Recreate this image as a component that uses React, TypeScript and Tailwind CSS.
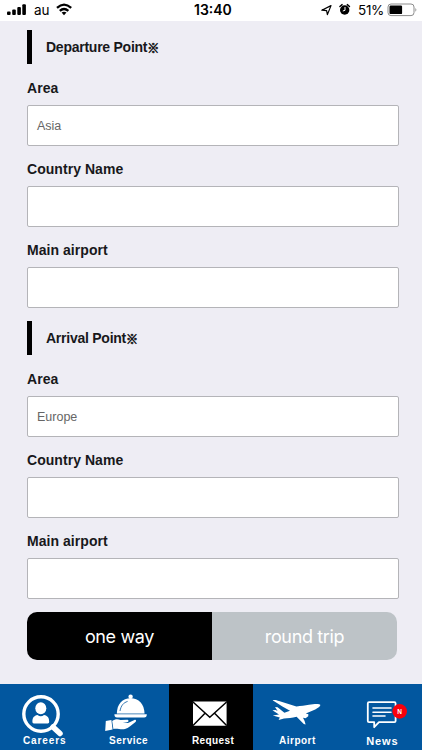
import type { ReactNode } from "react";
import clsx from "clsx";

function StatusBar() {
  return (
    <header className="relative h-[21px] bg-white text-black">
      <svg className="block h-[21px] w-full" viewBox="0 0 422 21">
        <rect x="7" y="11.5" width="3.6" height="3.5" rx="1" />
        <rect x="12.2" y="9.5" width="3.6" height="5.5" rx="1" />
        <rect x="17.3" y="7" width="3.6" height="8" rx="1" />
        <rect x="22.3" y="4.3" width="3.6" height="10.7" rx="1" />
        <g fill="none" stroke="black" strokeWidth="2.3">
          <path d="M57 7.8 Q64 1.4 71.2 7.8" />
          <path d="M59.8 10.8 Q64 7.1 68.4 10.8" />
        </g>
        <path d="M61.6 12.6 Q64 10.8 66.5 12.6 L64 15.2 Z" />
        <path d="M321.8 10.2 L331 5.6 L327.4 14.6 L326.6 10.6 Z" fill="none" stroke="black" strokeWidth="1.2" strokeLinejoin="round" />
        <circle cx="344.7" cy="10" r="4.7" />
        <path d="M339.9 6.5 L342.1 4.6 M349.5 6.5 L347.3 4.6" stroke="black" strokeWidth="1.4" strokeLinecap="round" />
        <path d="M345 7 V10.3 L342.8 11" fill="none" stroke="white" strokeWidth="1" />
        <rect x="388" y="4" width="26" height="11.6" rx="3" fill="white" stroke="#8c8c8c" />
        <rect x="389.5" y="5.5" width="12.6" height="8.6" rx="1.2" />
        <path d="M415.4 8 Q417.4 9.8 415.4 11.8 Z" fill="#8c8c8c" />
      </svg>
      <span className="absolute left-[34px] top-0 text-[13.5px] leading-[20px] tracking-[-0.2px] font-['Inter','Liberation_Sans',sans-serif]">au</span>
      <span className="absolute left-[194px] top-0 text-[14px] font-semibold leading-[20px] font-['Inter','Liberation_Sans',sans-serif]">13:40</span>
      <span className="absolute left-[358px] top-0 text-[13.5px] leading-[20px] tracking-[-0.3px] font-['Inter','Liberation_Sans',sans-serif]">51%</span>
    </header>
  );
}

function Field({ label, value }: { label: string; value?: string }) {
  return (
    <label className="block h-[81px]">
      <span className="block h-[41px] pt-[14px] text-[14px] font-bold leading-5 tracking-[0.05px]">{label}</span>
      <span className="block h-[41px] w-[372px] rounded-[2px] border border-[#b4b4b8] bg-white pl-[9px] text-[12.5px] leading-[40px] text-[#666]">
        {value}
      </span>
    </label>
  );
}

function Section({ title, area }: { title: string; area: string }) {
  return (
    <section className="h-[291px]">
      <h2 className="flex h-[34px] border-l-[5.5px] border-black pl-[14px] text-[14px] font-bold leading-[34px] tracking-[-0.25px]">
        {title}
        <span className="text-[12px] font-black leading-[36px] font-['Noto_Sans_CJK_JP',sans-serif] [-webkit-text-stroke:0.7px_#18181b]">※</span>
      </h2>
      <Field label="Area" value={area} />
      <Field label="Country Name" />
      <Field label="Main airport" />
    </section>
  );
}

function CareersIcon() {
  return (
    <>
      <circle cx="41" cy="30" r="17.2" fill="none" stroke="white" strokeWidth="3.4" />
      <path d="M53 43 L60 49.5" stroke="white" strokeWidth="5.5" strokeLinecap="round" />
      <ellipse cx="40.8" cy="24.3" rx="5.5" ry="6" />
      <path d="M32.4 38 C32.4 33.5 34 31.8 37.5 31 Q40.8 33.6 44 31 C47.6 31.8 49.2 33.5 49.2 38 Q49.2 39.4 47.8 39.4 H33.8 Q32.4 39.4 32.4 38 Z" />
    </>
  );
}

function ServiceIcon() {
  return (
    <>
      <circle cx="46.6" cy="12.7" r="2.2" />
      <path d="M32.8 29.8 C33 19.5 38.5 14.2 46.6 14.2 C54.7 14.2 60.2 19.5 60.6 29.8 Z" />
      <path d="M36 27 C37 21.5 39.4 18.8 43.6 17.4" fill="none" stroke="#02579f" strokeWidth="0.8" />
      <path d="M32 30 H61" stroke="#02579f" strokeWidth="0.5" />
      <path d="M30.4 30.3 H62.8 Q62.8 33.6 60.2 33.6 H33 Q30.4 33.6 30.4 30.3 Z" />
      <path d="M21.8 37 L27.4 36 L28.6 45.4 L21.2 47 Z" />
      <path d="M28.2 37 C31 34.8 34 34.8 36.5 36 L43 35.8 C45.2 35.9 45 38 43 38.2 L38.8 38.9 L44 38.9 L50.4 35.9 C52.4 35.3 52.6 37.2 51.2 38.2 C47.8 41 44.5 44 41 45 C36.5 46 33 43.8 29.4 45 Z" />
    </>
  );
}

function RequestIcon() {
  return (
    <>
      <rect x="24" y="17.5" width="33.6" height="24.2" rx="0.8" />
      <path d="M24 18 L40.8 33.2 L57.6 18 M24 41.5 L36 29.3 M57.6 41.5 L45.6 29.3" fill="none" stroke="black" strokeWidth="1.5" />
    </>
  );
}

function AirportIcon() {
  return (
    <path d="M19.6 16.2 C21.5 15.6 24 16.4 26 17 L43.4 22.4 C48 22.2 52 21.3 56 20.8 C61 19.8 66.6 19.4 67.4 21 C67 23.2 62.5 25.6 57.5 27.6 L52.8 29.4 L55.4 30.2 L55.2 32.2 L52.6 34.2 L50 33.8 L51.6 37 L52.6 40.4 L50.8 40 L43.6 32.8 C39 33.8 35 34.4 31 34.4 L25.6 36 L26.8 33.6 L19.8 31.6 L26 30.6 L19.4 26.2 L22.6 26 L24.6 27 L22 23 L24.6 23.2 L31.4 28.8 L37 26.8 L29.4 22.4 Z" />
  );
}

function NewsIcon() {
  return (
    <>
      <path d="M57.6 32 V37 Q57.6 38.2 56.4 38.2 H41 L36.2 43.2 V38.2 H31 Q29.8 38.2 29.8 37 V19.4 Q29.8 18.2 31 18.2 H56.4 Q57.6 18.2 57.6 19.4 V32" fill="none" stroke="white" strokeWidth="1.8" strokeLinejoin="round" />
      <path d="M35 24 H53 M35 28.2 H53 M35 32 H47" stroke="white" strokeWidth="1.6" strokeLinecap="round" />
      <circle cx="61.7" cy="27.4" r="7.3" fill="#f9000c" />
      <text x="61.7" y="29.8" textAnchor="middle" fontSize="6.5" fontWeight="bold" fontFamily="Liberation Sans">N</text>
    </>
  );
}

const tabs: { label: string; icon: ReactNode; labelClass: string }[] = [
  { label: "Careers", icon: <CareersIcon />, labelClass: "pl-[5px] text-[10px] tracking-[0.9px]" },
  { label: "Service", icon: <ServiceIcon />, labelClass: "pl-[4px] text-[10px] tracking-[0.5px]" },
  { label: "Request", icon: <RequestIcon />, labelClass: "pl-[4px] text-[10px] tracking-[0.4px]" },
  { label: "Airport", icon: <AirportIcon />, labelClass: "pl-[4px] text-[10px] tracking-[0.5px]" },
  { label: "News", icon: <NewsIcon />, labelClass: "pl-[5px] text-[11px] tracking-[0.9px]" },
];

export default function App() {
  return (
    <div className="flex h-[750px] w-[422px] flex-col overflow-hidden bg-[#eeedf4] text-[#18181b] font-['Liberation_Sans',Arial,sans-serif]">
      <StatusBar />
      <main className="flex-1 pl-[27px] pt-[9px]">
        <Section title="Departure Point" area="Asia" />
        <Section title="Arrival Point" area="Europe" />
        <div className="flex h-12 w-[370px] overflow-hidden rounded-[10px] text-[18px] leading-[49px] tracking-[-0.35px] text-white font-['Inter',sans-serif]">
          <button className="flex-1 bg-black">one way</button>
          <button className="flex-1 bg-[#bdc3c7]">round trip</button>
        </div>
      </main>
      <nav className="flex h-[66px] shrink-0 bg-[#02579f] text-white">
        {tabs.map((tab) => (
          <a key={tab.label} className={clsx("flex flex-1 flex-col", tab.label === "Request" && "bg-black")}>
            <svg className="block h-[50px] w-[84px]" viewBox="0 0 84 50" fill="white" overflow="visible">
              {tab.icon}
            </svg>
            <span className={clsx("block text-center font-bold leading-[14px]", tab.labelClass)}>{tab.label}</span>
          </a>
        ))}
      </nav>
    </div>
  );
}
